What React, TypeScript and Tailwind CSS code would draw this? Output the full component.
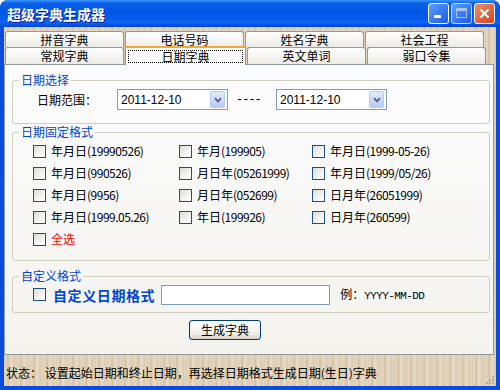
import React from "react";

const rows = [
  ["年月日(19990526)", "年月(199905)", "年月日(1999-05-26)"],
  ["年月日(990526)", "月日年(05261999)", "年月日(1999/05/26)"],
  ["年月日(9956)", "月日年(052699)", "日月年(26051999)"],
  ["年月日(1999.05.26)", "年日(199926)", "日月年(260599)"],
];

const topTabs = ["拼音字典", "电话号码", "姓名字典", "社会工程"];
const bottomTabs = ["常规字典", "日期字典", "英文单词", "弱口令集"];

const wood =
  "bg-[repeating-linear-gradient(90deg,#d9c8ac_0px,#e6d9c4_2px,#d3c0a2_4px,#e9ddca_7px,#dccbb1_10px,#e3d5bf_13px)]";

function Checkbox() {
  return (
    <span className="block w-[13px] h-[13px] shrink-0 border border-[#1c5180] bg-[linear-gradient(135deg,#dcdcd7_0%,#ffffff_90%)]" />
  );
}

function Label({ text }: { text: string }) {
  const i = text.indexOf("(");
  return (
    <span className="text-[12px] leading-[14px] text-black whitespace-nowrap">
      {text.slice(0, i)}
      <span className="tracking-[-0.5px]">{text.slice(i)}</span>
    </span>
  );
}

function Combo({ value }: { value: string }) {
  return (
    <div className="w-[111px] h-[21px] border border-[#7f9db9] bg-white flex items-center justify-between pl-[3px] pr-[2px]">
      <span className="text-[12px] font-['Liberation_Sans',sans-serif] text-black">{value}</span>
      <span className="w-[15px] h-[17px] rounded-[2px] border border-[#b6cbf5] bg-[linear-gradient(180deg,#e3ebfd,#b7cbf7)] flex items-center justify-center">
        <svg width="8" height="6" viewBox="0 0 8 6">
          <path d="M1 1.2 L4 4.4 L7 1.2" stroke="#4d6185" strokeWidth="1.8" fill="none" />
        </svg>
      </span>
    </div>
  );
}

function Group({ title, children, className }: { title: string; children: React.ReactNode; className?: string }) {
  return (
    <fieldset className={`border border-[#d0d0bf] rounded-[3px] ${className ?? ""}`}>
      <legend className="ml-[6px] px-[2px] text-[12px] leading-[14px] text-[#0046d5]">{title}</legend>
      {children}
    </fieldset>
  );
}

function Tab({ label, selected }: { label: string; selected?: boolean }) {
  if (selected) {
    return (
      <div className="relative z-10 w-[121px] h-[19px] -mb-px border-x border-[#919b9c] border-t-[2px] border-t-[#f2a93b] bg-[#fcfcfe] flex p-[2px]">
        <div className="flex-1 border border-dotted border-black flex items-center justify-center text-[12px] leading-[12px]">
          {label}
        </div>
      </div>
    );
  }
  return (
    <div className="w-[119px] h-full border border-[#919b9c] border-b-0 rounded-t-[3px] bg-[linear-gradient(180deg,#ffffff,#ecebe6)] flex items-center justify-center text-[12px] leading-[12px] text-black">
      {label}
    </div>
  );
}

export default function App() {
  return (
    <div className="w-[500px] h-[390px] flex flex-col rounded-t-[8px] overflow-hidden bg-[#0a4ddb] font-['Noto_Sans_CJK_SC',sans-serif]">
      {/* title bar */}
      <div className="h-[27px] shrink-0 flex items-center pl-[7px] pr-[5px] bg-[linear-gradient(180deg,#3d95ff_0%,#0a5fe8_12%,#0055e5_50%,#0b63f2_85%,#0042d0_100%)]">
        <span className="text-white font-bold text-[14px] leading-[16px] [text-shadow:1px_1px_0_#0a1a8a]">超级字典生成器</span>
        <div className="ml-auto flex gap-[2px] -mt-[1px]">
          <div className="w-[21px] h-[21px] rounded-[3px] border border-white bg-[linear-gradient(135deg,#5ba0ff,#1c5ae6)] flex items-end pl-[5px] pb-[5px]">
            <span className="block w-[7px] h-[3px] bg-white" />
          </div>
          <div className="w-[21px] h-[21px] rounded-[3px] border border-[#c7d9fb] bg-[linear-gradient(135deg,#5ba0ff,#1c5ae6)] flex items-center justify-center">
            <span className="block w-[11px] h-[10px] border border-[#a8c3f6] border-t-[3px]" />
          </div>
          <div className="w-[21px] h-[21px] rounded-[3px] border border-white bg-[linear-gradient(135deg,#f0906e,#d3421c)] flex items-center justify-center">
            <svg width="11" height="11" viewBox="0 0 11 11">
              <path d="M1.5 1.5 L9.5 9.5 M9.5 1.5 L1.5 9.5" stroke="white" strokeWidth="2" />
            </svg>
          </div>
        </div>
      </div>

      {/* body */}
      <div className={`flex-1 mx-[4px] mb-[4px] flex flex-col pt-[4px] ${wood}`}>
        <div className="h-[16px] flex gap-[1px] pl-[1px]">
          {topTabs.map((t) => (
            <Tab key={t} label={t} />
          ))}
        </div>
        <div className="h-[17px] flex items-end gap-[1px] pl-[1px]">
          {bottomTabs.map((t, i) => (
            <Tab key={t} label={t} selected={i === 1} />
          ))}
        </div>

        {/* tab page */}
        <div className="h-[291px] mr-[2px] border border-[#919b9c] bg-[linear-gradient(180deg,#fcfcfe,#f4f3ee)] pt-[8px] pl-[7px] pr-[3px]">
          <Group title="日期选择">
            <div className="flex items-center pl-[24px] pt-[2px] pb-[13px]">
              <span className="w-[80px] text-[12px] leading-[14px] text-black">日期范围：</span>
              <Combo value="2011-12-10" />
              <span className="ml-[8px] w-[40px] text-[12px] font-['Liberation_Mono',monospace] tracking-[-1px] text-black">----</span>
              <Combo value="2011-12-10" />
            </div>
          </Group>

          <Group title="日期固定格式" className="mt-[1px]">
            <div className="grid grid-cols-[146px_133px_1fr] auto-rows-[22px] pl-[20px] pt-[1px] pb-[10px]">
              {rows.flat().map((r) => (
                <div key={r} className="flex items-center gap-[5px]">
                  <Checkbox />
                  <Label text={r} />
                </div>
              ))}
              <div className="flex items-center gap-[5px]">
                <Checkbox />
                <span className="text-[12px] leading-[14px] text-[#ff0000]">全选</span>
              </div>
            </div>
          </Group>

          <Group title="自定义格式" className="mt-[8px]">
            <div className="flex items-center h-[21px] pl-[20px] mt-[1px] mb-[7px]">
              <Checkbox />
              <span className="ml-[7px] text-[14px] leading-[16px] font-bold tracking-[0.6px] text-[#0046d5]">自定义日期格式</span>
              <div className="ml-[6px] w-[169px] h-[20px] border border-[#7f9db9] bg-white" />
              <span className="ml-[10px] text-[12px] leading-[14px] text-black">
                例：<span className="font-['Liberation_Mono',monospace] text-[11px] tracking-[-0.6px]">YYYY-MM-DD</span>
              </span>
            </div>
          </Group>

          <div className="mt-[7px] ml-[177px] w-[72px] h-[20px] rounded-[3px] border border-[#003c74] bg-[linear-gradient(180deg,#ffffff,#f0efe8_70%,#d6d0c5)] flex items-center justify-center text-[12px] leading-[14px] text-black">
            生成字典
          </div>
        </div>

        {/* status bar */}
        <div className="flex-1 flex items-center pl-[2px] pt-[4px] relative">
          <span className="text-[12px] leading-[14px] text-black whitespace-nowrap">
            状态： 设置起始日期和终止日期，再选择日期格式生成日期(生日)字典
          </span>
          <svg className="absolute right-[2px] bottom-[2px]" width="10" height="10" viewBox="0 0 10 10">
            {[
              [8, 2], [8, 5], [8, 8], [5, 5], [5, 8], [2, 8],
            ].map(([x, y]) => (
              <rect key={`${x}-${y}`} x={x} y={y} width="2" height="2" fill="#b8ad98" />
            ))}
          </svg>
        </div>
      </div>
    </div>
  );
}
